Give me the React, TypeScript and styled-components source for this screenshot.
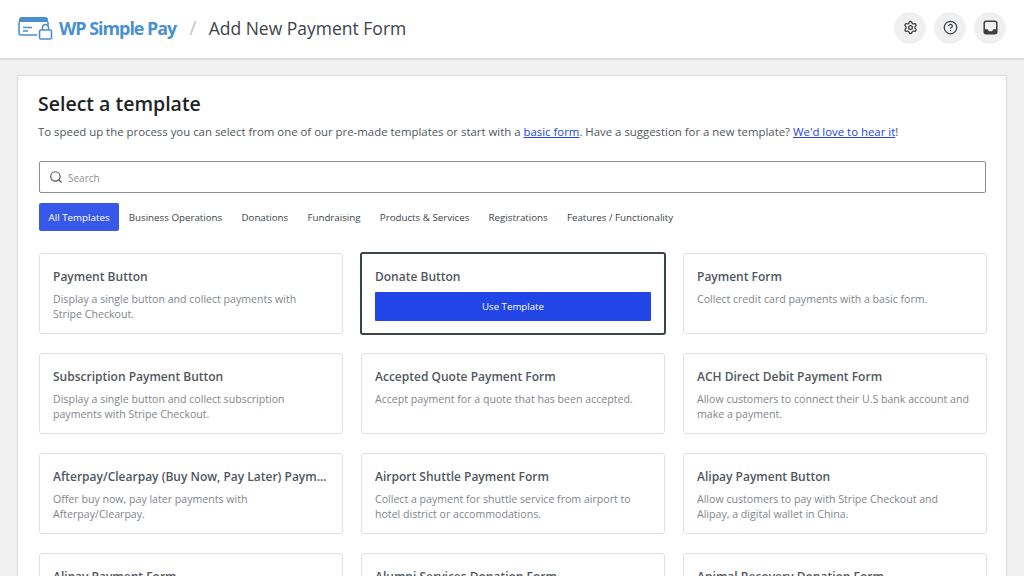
import React from 'react'
import styled, { createGlobalStyle } from 'styled-components'
import { Search, Settings, CircleHelp } from 'lucide-react'

const GlobalStyle = createGlobalStyle`
  html, body {
    margin: 0;
    height: 576px;
    overflow: hidden;
    background: #f0f0f1;
    font-family: "Open Sans", "Noto Sans", sans-serif;
  }
`

const tabs = [
  'All Templates',
  'Business Operations',
  'Donations',
  'Fundraising',
  'Products & Services',
  'Registrations',
  'Features / Functionality',
]

const templates = [
  { title: 'Payment Button', text: 'Display a single button and collect payments with Stripe Checkout.' },
  { title: 'Donate Button', text: '', active: true },
  { title: 'Payment Form', text: 'Collect credit card payments with a basic form.' },
  { title: 'Subscription Payment Button', text: 'Display a single button and collect subscription payments with Stripe Checkout.' },
  { title: 'Accepted Quote Payment Form', text: 'Accept payment for a quote that has been accepted.' },
  { title: 'ACH Direct Debit Payment Form', text: 'Allow customers to connect their U.S bank account and make a payment.' },
  { title: 'Afterpay/Clearpay (Buy Now, Pay Later) Payment Form', text: 'Offer buy now, pay later payments with Afterpay/Clearpay.' },
  { title: 'Airport Shuttle Payment Form', text: 'Collect a payment for shuttle service from airport to hotel district or accommodations.' },
  { title: 'Alipay Payment Button', text: 'Allow customers to pay with Stripe Checkout and Alipay, a digital wallet in China.' },
  { title: 'Alipay Payment Form', text: 'Allow customers to pay with Alipay.' },
  { title: 'Alumni Services Donation Form', text: 'Collect donations for alumni services.' },
  { title: 'Animal Recovery Donation Form', text: 'Collect donations for animal recovery.' },
]

const Logo = () => (
  <svg width="36" height="24" viewBox="0 0 36 24" fill="none">
    <path d="M1 3.5C1 2.1 2.1 1 3.5 1h24C28.9 1 30 2.1 30 3.5V6H1z" fill="#4a90d0" />
    <path d="M1 6v11c0 1.1.9 2 2 2h16M30 6v3" stroke="#4a90d0" strokeWidth="1.6" />
    <path d="M5 11.5h9M5 15h5" stroke="#4a90d0" strokeWidth="1.5" />
    <rect x="21.5" y="14" width="12" height="9" rx="1.5" stroke="#4a90d0" strokeWidth="1.6" />
    <path d="M24.5 14v-2.5a3 3 0 0 1 6 0V14" stroke="#4a90d0" strokeWidth="1.6" />
  </svg>
)

const InboxIcon = () => (
  <svg width="15" height="15" viewBox="0 0 15 15" fill="none">
    <rect x="1.2" y="1.2" width="12.6" height="12.6" rx="2" stroke="#3c4043" strokeWidth="1.5" />
    <path d="M1.5 9.3h3.2l1.2 2h3.2l1.2-2h3.2v3a1.5 1.5 0 0 1-1.5 1.5H3a1.5 1.5 0 0 1-1.5-1.5z" fill="#3c4043" />
  </svg>
)

const App: React.FC = () => (
  <>
    <GlobalStyle />
    <Header>
      <Brand>
        <Logo />
        <BrandName>WP Simple Pay</BrandName>
      </Brand>
      <Slash>/</Slash>
      <PageTitle>Add New Payment Form</PageTitle>
      <HeaderActions>
        <RoundButton>
          <Settings size={15} strokeWidth={2} />
        </RoundButton>
        <RoundButton>
          <CircleHelp size={15} strokeWidth={2} />
        </RoundButton>
        <RoundButton>
          <InboxIcon />
        </RoundButton>
      </HeaderActions>
    </Header>
    <Panel>
      <Title>Select a template</Title>
      <Intro>
        To speed up the process you can select from one of our pre-made templates or start with a{' '}
        <a href="#basic">basic form</a>. Have a suggestion for a new template? <a href="#hear">We'd love to hear it</a>!
      </Intro>
      <SearchBox>
        <Search size={14} strokeWidth={2} color="#50575e" />
        <SearchInput placeholder="Search" />
      </SearchBox>
      <Tabs>
        {tabs.map((tab, i) => (
          <Tab key={tab} $active={i === 0}>
            {tab}
          </Tab>
        ))}
      </Tabs>
      <Grid>
        {templates.map(t => (
          <Card key={t.title} $active={t.active}>
            <CardTitle>{t.title}</CardTitle>
            {t.active ? <UseButton>Use Template</UseButton> : <CardText>{t.text}</CardText>}
          </Card>
        ))}
      </Grid>
    </Panel>
  </>
)

const Header = styled.header`
  display: flex;
  align-items: center;
  box-sizing: border-box;
  height: 60px;
  padding: 0 18px 3px 18px;
  background: #fff;
  border-bottom: 2px solid #dcdcde;
`

const Brand = styled.div`
  display: flex;
  align-items: center;
  gap: 5px;
`

const BrandName = styled.span`
  color: #4a90d0;
  font-size: 17.9px;
  font-weight: 700;
  letter-spacing: -1px;
`

const Slash = styled.span`
  margin: 0 12px 0 13px;
  color: #c3c4c7;
  font-size: 20px;
`

const PageTitle = styled.h1`
  margin: 0;
  color: #3c434a;
  font-size: 17.5px;
  font-weight: 400;
`

const HeaderActions = styled.div`
  display: flex;
  gap: 8px;
  margin-left: auto;
`

const RoundButton = styled.div`
  display: flex;
  align-items: center;
  justify-content: center;
  width: 32px;
  height: 32px;
  border-radius: 50%;
  background: #f0f0f1;
  color: #3c4043;
`

const Panel = styled.main`
  box-sizing: border-box;
  width: 990px;
  margin: 15px 0 0 17px;
  padding: 14px 20px 0;
  background: #fff;
  border: 1px solid #dcdcde;
`

const Title = styled.h2`
  margin: 0;
  color: #1d2327;
  font-size: 19.5px;
  font-weight: 600;
  line-height: 28px;
`

const Intro = styled.p`
  margin: 4px 0 0;
  color: #50575e;
  font-size: 11.4px;
  line-height: 20px;

  a {
    color: #2145e6;
  }
`

const SearchBox = styled.label`
  display: flex;
  align-items: center;
  gap: 5px;
  box-sizing: border-box;
  height: 32px;
  margin: 19px 0 0 1px;
  padding: 0 9px;
  border: 1px solid #8c8f94;
  border-radius: 2px;
`

const SearchInput = styled.input`
  flex: 1;
  border: 0;
  outline: 0;
  padding: 1px 0 0;
  font-family: inherit;
  font-size: 10px;

  &::placeholder {
    color: #8c8f94;
  }
`

const Tabs = styled.nav`
  display: flex;
  margin: 10px 0 0 1px;
`

const Tab = styled.div<{ $active?: boolean }>`
  box-sizing: border-box;
  height: 28px;
  padding: 1px 9.6px 0;
  border-radius: 2px;
  background: ${p => (p.$active ? '#3858e9' : 'transparent')};
  color: ${p => (p.$active ? '#fff' : '#3c434a')};
  font-size: 9.75px;
  line-height: 27px;
`

const Grid = styled.div`
  display: grid;
  grid-template-columns: repeat(3, 304px);
  grid-auto-rows: 81px;
  column-gap: 18px;
  row-gap: 19px;
  margin: 22px 0 0 1px;
`

const Card = styled.article<{ $active?: boolean }>`
  box-sizing: border-box;
  padding: 14px 13px 0;
  border: ${p => (p.$active ? '2px solid #3c434a' : '1px solid #e0e0e2')};
  margin: ${p => (p.$active ? '-1px' : '0')};
  border-radius: 3px;
  background: #fff;
`

const CardTitle = styled.h3`
  margin: 0;
  overflow: hidden;
  color: #50575e;
  font-size: 12px;
  font-weight: 600;
  line-height: 18px;
  white-space: nowrap;
  text-overflow: ellipsis;
`

const CardText = styled.p`
  margin: 6px 0 0;
  padding-right: 3px;
  color: #82868c;
  font-size: 10.6px;
  line-height: 15px;
`

const UseButton = styled.button`
  display: block;
  width: 100%;
  height: 29px;
  margin-top: 6px;
  border: 0;
  border-radius: 1px;
  background: #2145e6;
  color: #fff;
  font-family: inherit;
  font-size: 9.7px;
`

export default App
